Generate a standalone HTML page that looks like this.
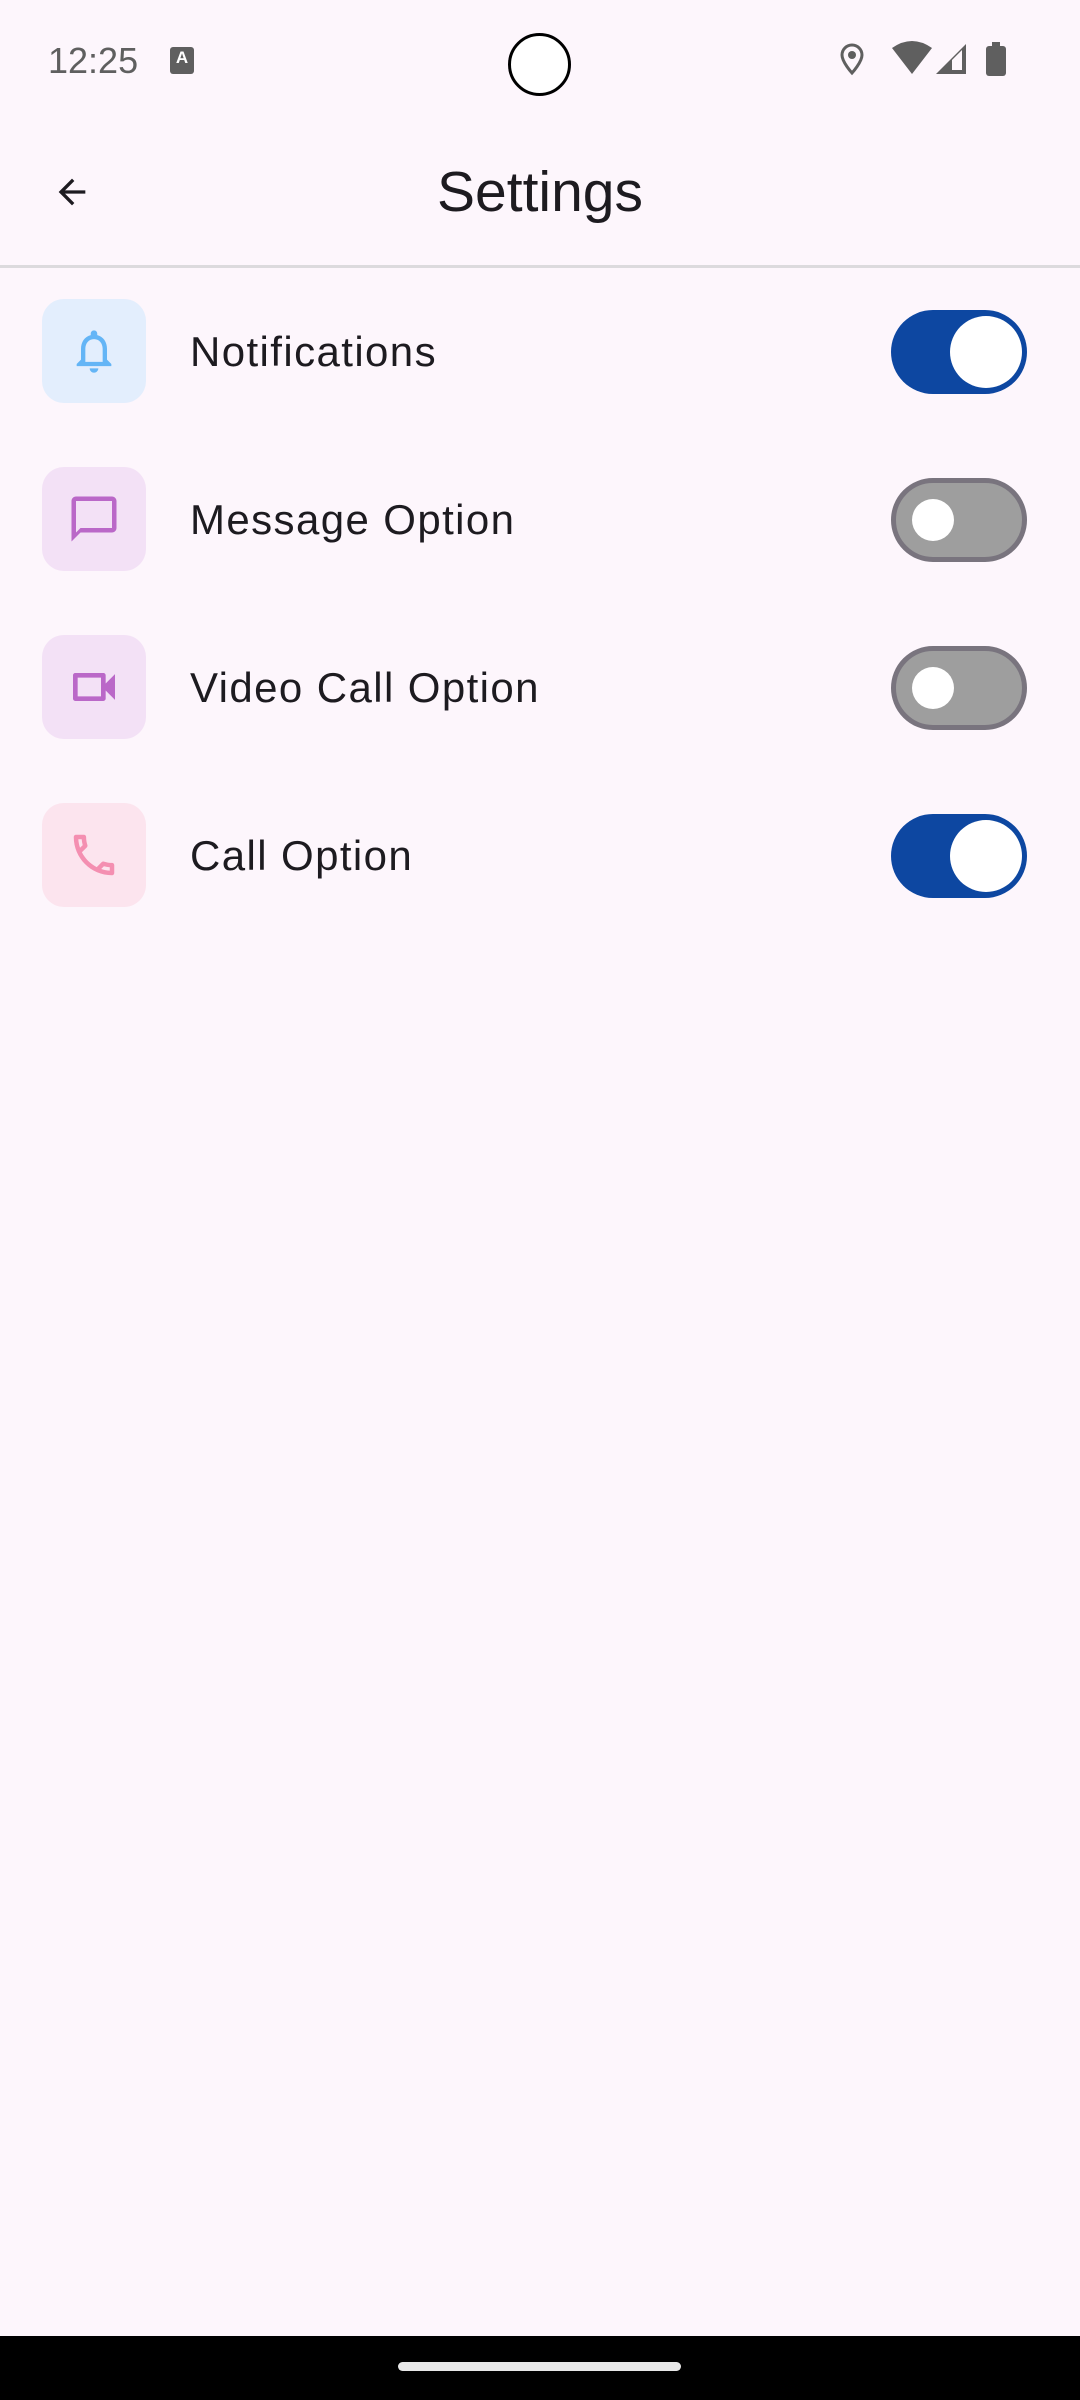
<!DOCTYPE html>
<html><head><meta charset="utf-8"><style>
*{margin:0;padding:0;box-sizing:border-box}
body{width:1080px;height:2400px;background:#FDF6FC;position:relative;overflow:hidden;font-family:"Liberation Sans",Roboto,sans-serif;color:#1D1B20}
.abs{position:absolute}
.time{left:48px;top:40px;font-size:36px;color:#5f5f5f}
.title{left:0;width:1080px;text-align:center;top:159px;font-size:57px;color:#1D1B20}
.div{left:0;top:265px;width:1080px;height:3px;background:#DCDADD}
.box{left:42px;width:104px;height:104px;border-radius:22px;display:flex;align-items:center;justify-content:center}
.lbl{left:190px;font-size:42px;letter-spacing:1.4px;color:#1D1B20}
.sw{left:891px;width:136px;height:84px;border-radius:42px}
.on{background:#0D47A1}
.on::after{content:"";position:absolute;left:62px;top:6px;width:72px;height:72px;border-radius:50%;background:#fff;margin-left:-3px}
.off{background:#9E9E9E;border:5px solid #79747E}
.off::after{content:"";position:absolute;left:16px;top:16px;width:42px;height:42px;border-radius:50%;background:#fff}
</style></head><body>
<div class="abs time">12:25</div>
<div class="abs" style="left:170px;top:47px;width:24px;height:27px;background:#5f5f5f;border-radius:3px;color:#fff;font-size:17px;font-weight:bold;text-align:center;line-height:22px">A</div>
<div class="abs" style="left:508px;top:33px;width:63px;height:63px;border-radius:50%;border:3px solid #000;background:#fff"></div>
<svg class="abs" style="left:838px;top:42px" width="28" height="34" viewBox="0 0 28 34"><path d="M14 3a10 10 0 0 0-10 10c0 7 10 18 10 18s10-11 10-18A10 10 0 0 0 14 3z" fill="none" stroke="#5f5f5f" stroke-width="3"/><circle cx="14" cy="13" r="4" fill="#5f5f5f"/></svg>
<svg class="abs" style="left:890px;top:40px" width="44" height="36" viewBox="0 0 44 36"><path d="M2 8Q22-6 42 8L22 34Z" fill="#5f5f5f"/></svg>
<svg class="abs" style="left:934px;top:42px" width="34" height="34" viewBox="0 0 34 34"><path d="M2 32L32 2V32Z" fill="#5f5f5f"/><path d="M18 18V28H28V8Z" fill="#FDF6FC"/></svg>
<div class="abs" style="left:986px;top:46px;width:20px;height:30px;background:#5f5f5f;border-radius:3px"></div>
<div class="abs" style="left:992px;top:42px;width:8px;height:6px;background:#5f5f5f"></div>
<svg class="abs" style="left:52px;top:172px" width="40" height="40" viewBox="0 0 24 24"><path d="M20 11H7.830l5.59-5.59L12 4l-8 8 8 8 1.41-1.41L7.83 13H20v-2z" fill="#1D1B20"/></svg>
<div class="abs title">Settings</div>
<div class="abs div"></div>

<div class="abs box" style="top:299px;background:#E3EEFD"><svg width="52" height="52" viewBox="0 0 24 24"><path d="M12 22c1.1 0 2-.9 2-2h-4c0 1.1.9 2 2 2zm6-6v-5c0-3.07-1.64-5.64-4.5-6.32V4c0-.83-.67-1.5-1.5-1.5s-1.5.67-1.5 1.5v.68C7.63 5.36 6 7.92 6 11v5l-2 2v1h16v-1l-2-2zm-2 1H8v-6c0-2.48 1.51-4.5 4-4.5s4 2.02 4 4.5v6z" fill="#64B5F6"/></svg></div>
<div class="abs lbl" style="top:328px">Notifications</div>
<div class="abs sw on" style="top:310px"></div>

<div class="abs box" style="top:467px;background:#F3E1F6"><svg width="54" height="54" viewBox="0 0 24 24"><path d="M20 2H4c-1.1 0-2 .9-2 2v18l4-4h14c1.1 0 2-.9 2-2V4c0-1.1-.9-2-2-2zm0 14H6l-2 2V4h16v12z" fill="#BA68C8"/></svg></div>
<div class="abs lbl" style="top:496px">Message Option</div>
<div class="abs sw off" style="top:478px"></div>

<div class="abs box" style="top:635px;background:#F3E1F6"><svg width="56" height="56" viewBox="0 0 24 24"><path d="M15 8v8H5V8h10m1-2H4c-.55 0-1 .45-1 1v10c0 .55.45 1 1 1h12c.55 0 1-.45 1-1v-3.5l4 4v-11l-4 4V7c0-.55-.45-1-1-1z" fill="#BA68C8"/></svg></div>
<div class="abs lbl" style="top:664px">Video Call Option</div>
<div class="abs sw off" style="top:646px"></div>

<div class="abs box" style="top:803px;background:#FCE4EE"><svg width="54" height="54" viewBox="0 0 24 24"><path d="M6.54 5c.06.89.21 1.76.45 2.59l-1.2 1.2c-.41-1.2-.67-2.47-.76-3.79h1.51m9.86 12.02c.85.24 1.72.39 2.6.45v1.49c-1.32-.09-2.59-.35-3.8-.75l1.2-1.19M7.5 3H4c-.55 0-1 .45-1 1 0 9.39 7.61 17 17 17 .55 0 1-.45 1-1v-3.49c0-.55-.45-1-1-1-1.24 0-2.45-.2-3.57-.57-.1-.04-.21-.05-.31-.05-.26 0-.51.1-.71.29l-2.2 2.2c-2.83-1.45-5.15-3.76-6.59-6.59l2.2-2.2c.28-.28.36-.67.25-1.02C8.7 6.45 8.5 5.25 8.5 4c0-.55-.45-1-1-1z" fill="#F48FB1"/></svg></div>
<div class="abs lbl" style="top:832px">Call Option</div>
<div class="abs sw on" style="top:814px"></div>

<div class="abs" style="left:0;top:2336px;width:1080px;height:64px;background:#000"></div>
<div class="abs" style="left:398px;top:2362px;width:283px;height:9px;border-radius:5px;background:#e8e8e8"></div>
</body></html>
